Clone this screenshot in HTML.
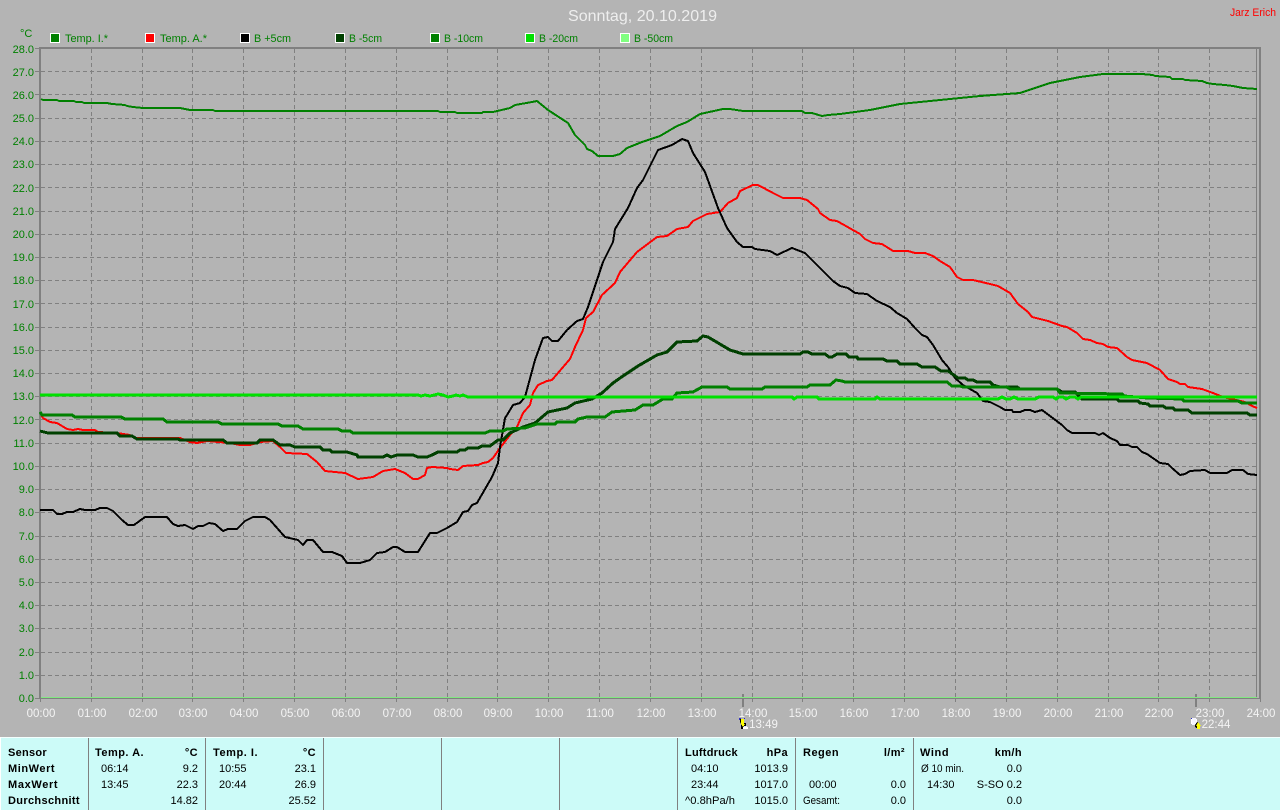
<!DOCTYPE html>
<html>
<head>
<meta charset="utf-8">
<title>Sonntag, 20.10.2019</title>
<style>
html,body{margin:0;padding:0;background:#b4b4b4;width:1280px;height:810px;overflow:hidden}
svg{display:block;position:absolute;left:0;top:0}
text{font-family:"Liberation Sans",sans-serif;font-size:11px}
.y text{fill:#008000;text-anchor:end}
.l text{fill:#008000}
.x text{fill:#f4f4f4;font-size:11.5px;text-anchor:middle}
.s{fill:none;stroke-linejoin:round;shape-rendering:crispEdges}
.t text{fill:#000}
.b{font-weight:bold;letter-spacing:.4px}
.e{text-anchor:end}
</style>
</head>
<body>
<svg width="1280" height="810" viewBox="0 0 1280 810" xmlns="http://www.w3.org/2000/svg">
<rect width="1280" height="810" fill="#b4b4b4"/>
<text x="568" y="21" font-size="16" style="font-size:16px" fill="#eeeeee" textLength="149" lengthAdjust="spacingAndGlyphs">Sonntag, 20.10.2019</text>
<text x="1230" y="16" fill="#ff0000" textLength="46" lengthAdjust="spacingAndGlyphs">Jarz Erich</text>
<text x="20" y="37" fill="#008000">°C</text>

<g fill="#fff">
<rect x="50" y="33" width="10" height="10"/><rect x="145" y="33" width="10" height="10"/><rect x="240" y="33" width="10" height="10"/><rect x="335" y="33" width="10" height="10"/><rect x="430" y="33" width="10" height="10"/><rect x="525" y="33" width="10" height="10"/><rect x="620" y="33" width="10" height="10"/>
</g>
<rect x="51" y="34" width="8" height="8" fill="#008000"/><rect x="146" y="34" width="8" height="8" fill="#ff0000"/><rect x="241" y="34" width="8" height="8" fill="#000"/><rect x="336" y="34" width="8" height="8" fill="#004000"/><rect x="431" y="34" width="8" height="8" fill="#008000"/><rect x="526" y="34" width="8" height="8" fill="#00e000"/><rect x="621" y="34" width="8" height="8" fill="#80ff80"/>
<g class="l">
<text x="65" y="42" textLength="43" lengthAdjust="spacingAndGlyphs">Temp. I.*</text>
<text x="160" y="42" textLength="47" lengthAdjust="spacingAndGlyphs">Temp. A.*</text>
<text x="254" y="42" textLength="37" lengthAdjust="spacingAndGlyphs">B +5cm</text>
<text x="349" y="42" textLength="33" lengthAdjust="spacingAndGlyphs">B -5cm</text>
<text x="444" y="42" textLength="39" lengthAdjust="spacingAndGlyphs">B -10cm</text>
<text x="539" y="42" textLength="39" lengthAdjust="spacingAndGlyphs">B -20cm</text>
<text x="634" y="42" textLength="39" lengthAdjust="spacingAndGlyphs">B -50cm</text>
</g>

<g class="y">
<text x="34" y="53">28.0</text><text x="34" y="76">27.0</text><text x="34" y="99">26.0</text><text x="34" y="122">25.0</text><text x="34" y="145">24.0</text><text x="34" y="168">23.0</text><text x="34" y="192">22.0</text><text x="34" y="215">21.0</text><text x="34" y="238">20.0</text><text x="34" y="261">19.0</text><text x="34" y="284">18.0</text><text x="34" y="308">17.0</text><text x="34" y="331">16.0</text><text x="34" y="354">15.0</text><text x="34" y="377">14.0</text><text x="34" y="400">13.0</text><text x="34" y="424">12.0</text><text x="34" y="447">11.0</text><text x="34" y="470">10.0</text><text x="34" y="493">9.0</text><text x="34" y="516">8.0</text><text x="34" y="540">7.0</text><text x="34" y="563">6.0</text><text x="34" y="586">5.0</text><text x="34" y="609">4.0</text><text x="34" y="632">3.0</text><text x="34" y="656">2.0</text><text x="34" y="679">1.0</text><text x="34" y="702">0.0</text>
</g>

<!-- grid -->
<path shape-rendering="crispEdges" fill="none" stroke="#808080" stroke-width="1" stroke-dasharray="4 3" d="M41 71.5H1257M41 94.5H1257M41 118.5H1257M41 141.5H1257M41 164.5H1257M41 187.5H1257M41 211.5H1257M41 234.5H1257M41 257.5H1257M41 280.5H1257M41 303.5H1257M41 327.5H1257M41 350.5H1257M41 373.5H1257M41 396.5H1257M41 419.5H1257M41 443.5H1257M41 466.5H1257M41 489.5H1257M41 512.5H1257M41 536.5H1257M41 559.5H1257M41 582.5H1257M41 605.5H1257M41 628.5H1257M41 652.5H1257M41 675.5H1257"/>
<path shape-rendering="crispEdges" fill="none" stroke="#808080" stroke-width="1" stroke-dasharray="4 3" d="M91.5 49V698M142.5 49V698M192.5 49V698M243.5 49V698M294.5 49V698M345.5 49V698M396.5 49V698M447.5 49V698M497.5 49V698M548.5 49V698M599.5 49V698M650.5 49V698M701.5 49V698M752.5 49V698M802.5 49V698M853.5 49V698M904.5 49V698M955.5 49V698M1006.5 49V698M1057.5 49V698M1108.5 49V698M1158.5 49V698M1209.5 49V698"/>
<!-- ticks -->
<path shape-rendering="crispEdges" fill="none" stroke="#808080" stroke-width="1" d="M40.5 698V702M91.5 698V702M142.5 698V702M192.5 698V702M243.5 698V702M294.5 698V702M345.5 698V702M396.5 698V702M447.5 698V702M497.5 698V702M548.5 698V702M599.5 698V702M650.5 698V702M701.5 698V702M752.5 698V702M802.5 698V702M853.5 698V702M904.5 698V702M955.5 698V702M1006.5 698V702M1057.5 698V702M1108.5 698V702M1158.5 698V702M1209.5 698V702M1260.5 698V702M35 48.5H40M35 71.5H40M35 94.5H40M35 118.5H40M35 141.5H40M35 164.5H40M35 187.5H40M35 211.5H40M35 234.5H40M35 257.5H40M35 280.5H40M35 303.5H40M35 327.5H40M35 350.5H40M35 373.5H40M35 396.5H40M35 419.5H40M35 443.5H40M35 466.5H40M35 489.5H40M35 512.5H40M35 536.5H40M35 559.5H40M35 582.5H40M35 605.5H40M35 628.5H40M35 652.5H40M35 675.5H40M35 698.5H40"/>
<!-- frame -->
<g fill="#808080" shape-rendering="crispEdges">
<rect x="39" y="47" width="2" height="652"/>
<rect x="39" y="47" width="1222" height="2"/>
<rect x="1259" y="47" width="2" height="652"/>
<rect x="1256" y="49" width="1" height="649"/>
<rect x="39" y="698" width="1222" height="1"/>
<rect x="742" y="694" width="2" height="13"/>
<rect x="1195" y="694" width="2" height="13"/>
</g>

<!-- Temp I -->
<polyline class="s" stroke="#008000" stroke-width="2" points="41,99 43,100 57,100 59,101 74,101 76,102 82,102 84,103 107,103 112,104 125,105 127,106 133,107 143,108 180,108 190,110 213,110 215,111 438,111 440,112 455,112 457,113 482,113 483,112 493,112 510,108 515,105 532,102 537,101 548,110 568,123 575,135 585,145 587,149 592,151 598,156 613,156 620,154 627,148 642,142 660,136 677,126 687,122 700,114 723,109 730,109 743,111 802,111 805,113 812,113 822,116 828,115 840,114 870,110 900,104 940,100 980,96 1020,93 1050,83 1080,77 1103,74 1142,74 1153,75 1155,76 1170,77 1172,79 1183,79 1185,80 1202,81 1207,83 1213,84 1225,85 1233,86 1243,88 1257,89"/>
<!-- Temp A -->
<polyline class="s" stroke="#ff0000" stroke-width="2" points="41,415 43,418 50,422 57,423 67,429 73,430 78,429 83,430 95,430 98,432 117,433 130,435 135,438 180,438 190,442 197,443 207,441 230,443 240,445 250,445 260,442 273,441 280,447 286,453 307,454 317,462 325,471 345,473 358,479 373,477 383,471 395,469 405,473 413,479 418,479 425,475 427,468 432,467 447,468 450,469 458,470 463,466 478,465 483,463 488,462 493,458 500,448 510,435 517,427 523,413 530,405 533,393 538,385 547,381 552,380 570,359 575,347 583,330 586,318 593,312 602,295 615,283 620,272 637,252 657,237 667,236 677,229 688,227 693,221 707,214 720,212 728,203 737,198 740,191 753,185 758,185 773,193 783,198 800,198 807,200 818,209 820,213 830,220 837,221 860,234 865,239 873,243 882,244 893,251 908,251 915,253 925,253 933,256 940,261 950,267 957,277 963,280 973,280 990,284 998,286 1010,293 1018,304 1028,312 1032,317 1040,319 1048,321 1062,326 1067,327 1077,333 1083,339 1090,340 1097,343 1103,344 1108,347 1117,348 1127,357 1132,360 1147,363 1160,370 1168,379 1177,382 1180,384 1185,384 1188,387 1202,389 1213,393 1223,397 1245,402 1252,406 1257,408"/>
<!-- B +5 -->
<polyline class="s" stroke="#000" stroke-width="2" points="40,510 53,510 57,514 62,514 67,512 73,512 80,509 85,510 95,510 100,508 107,508 113,511 122,520 128,525 134,525 145,517 167,517 173,524 178,526 185,525 193,529 198,526 203,526 209,523 215,524 223,531 228,529 237,529 245,521 253,517 265,517 270,520 285,537 298,540 303,545 307,540 313,540 323,552 332,552 342,556 347,563 360,563 370,560 377,553 385,552 393,547 397,547 405,552 418,552 430,533 437,533 447,528 457,522 463,512 468,511 472,505 477,503 492,477 498,463 500,447 505,418 507,415 513,405 520,403 525,397 535,360 543,338 548,337 552,341 558,341 567,330 577,321 583,319 588,307 603,262 613,242 615,229 628,208 637,188 643,180 658,150 672,145 682,139 688,141 693,153 705,172 718,208 727,228 737,242 743,247 752,247 755,249 770,251 777,255 792,248 805,253 813,261 833,281 840,286 848,288 855,293 867,294 877,301 890,307 897,313 907,319 915,328 922,335 927,337 933,345 942,360 948,367 955,378 963,385 977,393 983,401 990,402 1000,407 1005,410 1012,410 1013,412 1020,412 1025,410 1030,410 1035,412 1042,410 1050,416 1062,425 1067,430 1072,433 1095,433 1099,435 1103,433 1110,438 1117,441 1120,445 1128,445 1132,447 1137,447 1142,452 1147,454 1160,463 1168,464 1172,468 1180,475 1185,474 1190,471 1205,470 1210,473 1227,473 1232,470 1243,470 1248,474 1257,475"/>
<!-- B -5 -->
<polyline class="s" stroke="#004000" stroke-width="3" points="40,431 48,433 117,433 120,436 132,436 137,439 178,439 180,440 223,440 227,443 257,443 260,440 273,440 280,445 290,445 295,447 320,447 323,450 330,450 332,452 347,452 357,455 358,457 383,457 387,455 391,457 397,455 413,455 418,457 427,457 432,455 438,452 457,452 460,450 465,450 468,448 478,448 482,446 490,446 498,440 503,440 510,433 523,427 535,423 548,412 567,408 575,403 592,399 602,393 613,383 623,376 638,366 657,355 667,352 677,342 697,341 703,336 708,337 730,350 743,354 800,354 803,352 808,352 812,354 825,354 829,357 832,357 837,354 846,354 849,357 857,357 858,359 883,359 887,361 897,361 900,364 917,364 922,367 935,367 941,371 948,371 958,378 965,378 968,380 973,380 977,382 990,382 993,385 1000,387 1017,387 1020,389 1057,389 1062,392 1075,392 1082,399 1117,399 1119,401 1138,401 1140,403 1148,404 1150,406 1163,406 1166,408 1173,408 1175,410 1188,410 1192,413 1247,413 1250,415 1257,415"/>
<!-- B -10 -->
<polyline class="s" stroke="#008000" stroke-width="3" points="40,412 42,415 72,415 75,417 121,417 125,419 163,419 167,422 218,422 222,424 278,424 282,426 298,426 303,429 338,429 342,431 350,431 353,433 485,433 490,431 503,431 507,429 525,428 537,424 555,424 557,422 575,422 578,419 587,417 605,417 612,412 635,410 643,405 653,405 663,399 672,399 677,393 693,392 702,387 727,387 730,389 762,389 765,387 807,387 810,385 830,385 836,380 842,381 845,382 947,382 952,386 960,386 963,387 1007,387 1010,389 1057,389 1060,393 1122,394 1124,396 1148,398 1182,399 1184,401 1238,401 1242,403 1257,403"/>
<!-- B -20 -->
<polyline class="s" stroke="#00e000" stroke-width="3" points="40,395 418,395 421,396 425,395 430,396 438,394 443,395 448,397 453,396 456,395 460,396 463,395 468,397 792,397 794,399 797,397 817,397 819,399 875,399 877,397 880,399 998,399 1002,397 1006,399 1010,399 1014,397 1018,399 1035,399 1039,397 1053,397 1056,399 1059,397 1063,397 1066,399 1070,397 1075,397 1078,399 1081,397 1257,397"/>
<!-- B -50 -->
<rect x="41" y="697" width="1216" height="1" fill="#80e880" shape-rendering="crispEdges"/>

<g class="x">
<text x="41" y="717">00:00</text><text x="92" y="717">01:00</text><text x="143" y="717">02:00</text><text x="193" y="717">03:00</text><text x="244" y="717">04:00</text><text x="295" y="717">05:00</text><text x="346" y="717">06:00</text><text x="397" y="717">07:00</text><text x="448" y="717">08:00</text><text x="498" y="717">09:00</text><text x="549" y="717">10:00</text><text x="600" y="717">11:00</text><text x="651" y="717">12:00</text><text x="702" y="717">13:00</text><text x="753" y="717">14:00</text><text x="803" y="717">15:00</text><text x="854" y="717">16:00</text><text x="905" y="717">17:00</text><text x="956" y="717">18:00</text><text x="1007" y="717">19:00</text><text x="1058" y="717">20:00</text><text x="1109" y="717">21:00</text><text x="1159" y="717">22:00</text><text x="1210" y="717">23:00</text><text x="1261" y="717">24:00</text>
<text x="763.5" y="728">13:49</text><text x="1216" y="728">22:44</text>
</g>

<!-- sun / moon icons -->
<g shape-rendering="crispEdges">
<rect x="739" y="718" width="2" height="2" fill="#3030c0"/><rect x="744" y="718" width="1" height="1" fill="#3030c0"/>
<polygon points="740,719 744,719 744,723 746,723 746,726 744,726 743,729 741,729 741,724 740,722" fill="#000"/>
<polygon points="741,719 744,719 744,724 745,724 743,727 741,724" fill="#ffff00"/>
<rect x="743" y="727" width="5" height="2" fill="#fff"/><rect x="744" y="726" width="3" height="1" fill="#e8e8ff"/>
<rect x="1191" y="719" width="6" height="5" fill="#fff"/><rect x="1192" y="718" width="4" height="7" fill="#f4f4ff"/>
<rect x="1191" y="718" width="1" height="1" fill="#3030c0"/><rect x="1196" y="723" width="1" height="1" fill="#3030c0"/>
<polygon points="1195,725 1197,722 1197,722 1198,722 1198,729 1195,727" fill="#000"/>
<polygon points="1198,722 1201,726 1200,726 1200,729 1197,729 1197,726 1196,726" fill="#ffff00"/>
</g>

<!-- bottom panel -->
<rect x="0" y="737" width="1280" height="73" fill="#ccfbf8" shape-rendering="crispEdges"/>
<rect x="0" y="737" width="1280" height="1" fill="#f4fffe" shape-rendering="crispEdges"/>
<rect x="0" y="737" width="1" height="73" fill="#ffffff" shape-rendering="crispEdges"/>
<g fill="#808080" shape-rendering="crispEdges">
<rect x="88" y="738" width="1" height="72"/><rect x="205" y="738" width="1" height="72"/><rect x="323" y="738" width="1" height="72"/><rect x="441" y="738" width="1" height="72"/><rect x="559" y="738" width="1" height="72"/><rect x="677" y="738" width="1" height="72"/><rect x="795" y="738" width="1" height="72"/><rect x="913" y="738" width="1" height="72"/>
</g>
<g class="t">
<text class="b" x="8" y="756" textLength="39">Sensor</text>
<text class="b" x="8" y="772" textLength="47">MinWert</text>
<text class="b" x="8" y="788" textLength="50">MaxWert</text>
<text class="b" x="8" y="804" textLength="72">Durchschnitt</text>

<text class="b" x="95" y="756" textLength="49">Temp. A.</text>
<text class="b e" x="198" y="756">°C</text>
<text x="101" y="772">06:14</text><text class="e" x="198" y="772">9.2</text>
<text x="101" y="788">13:45</text><text class="e" x="198" y="788">22.3</text>
<text class="e" x="198" y="804">14.82</text>

<text class="b" x="213" y="756" textLength="45">Temp. I.</text>
<text class="b e" x="316" y="756">°C</text>
<text x="219" y="772">10:55</text><text class="e" x="316" y="772">23.1</text>
<text x="219" y="788">20:44</text><text class="e" x="316" y="788">26.9</text>
<text class="e" x="316" y="804">25.52</text>

<text class="b" x="685" y="756" textLength="53">Luftdruck</text>
<text class="b e" x="788" y="756">hPa</text>
<text x="691" y="772">04:10</text><text class="e" x="788" y="772">1013.9</text>
<text x="691" y="788">23:44</text><text class="e" x="788" y="788">1017.0</text>
<text x="685" y="804" textLength="50" lengthAdjust="spacingAndGlyphs">^0.8hPa/h</text><text class="e" x="788" y="804">1015.0</text>

<text class="b" x="803" y="756" textLength="36">Regen</text>
<text class="b e" x="905" y="756">l/m²</text>
<text x="809" y="788">00:00</text><text class="e" x="906" y="788">0.0</text>
<text x="803" y="804" textLength="37" lengthAdjust="spacingAndGlyphs">Gesamt:</text><text class="e" x="906" y="804">0.0</text>

<text class="b" x="920" y="756" textLength="29">Wind</text>
<text class="b e" x="1022" y="756">km/h</text>
<text x="921" y="772" textLength="43" lengthAdjust="spacingAndGlyphs">Ø 10 min.</text><text class="e" x="1022" y="772">0.0</text>
<text x="927" y="788">14:30</text><text class="e" x="1022" y="788">S-SO 0.2</text>
<text class="e" x="1022" y="804">0.0</text>
</g>
</svg>
</body>
</html>
